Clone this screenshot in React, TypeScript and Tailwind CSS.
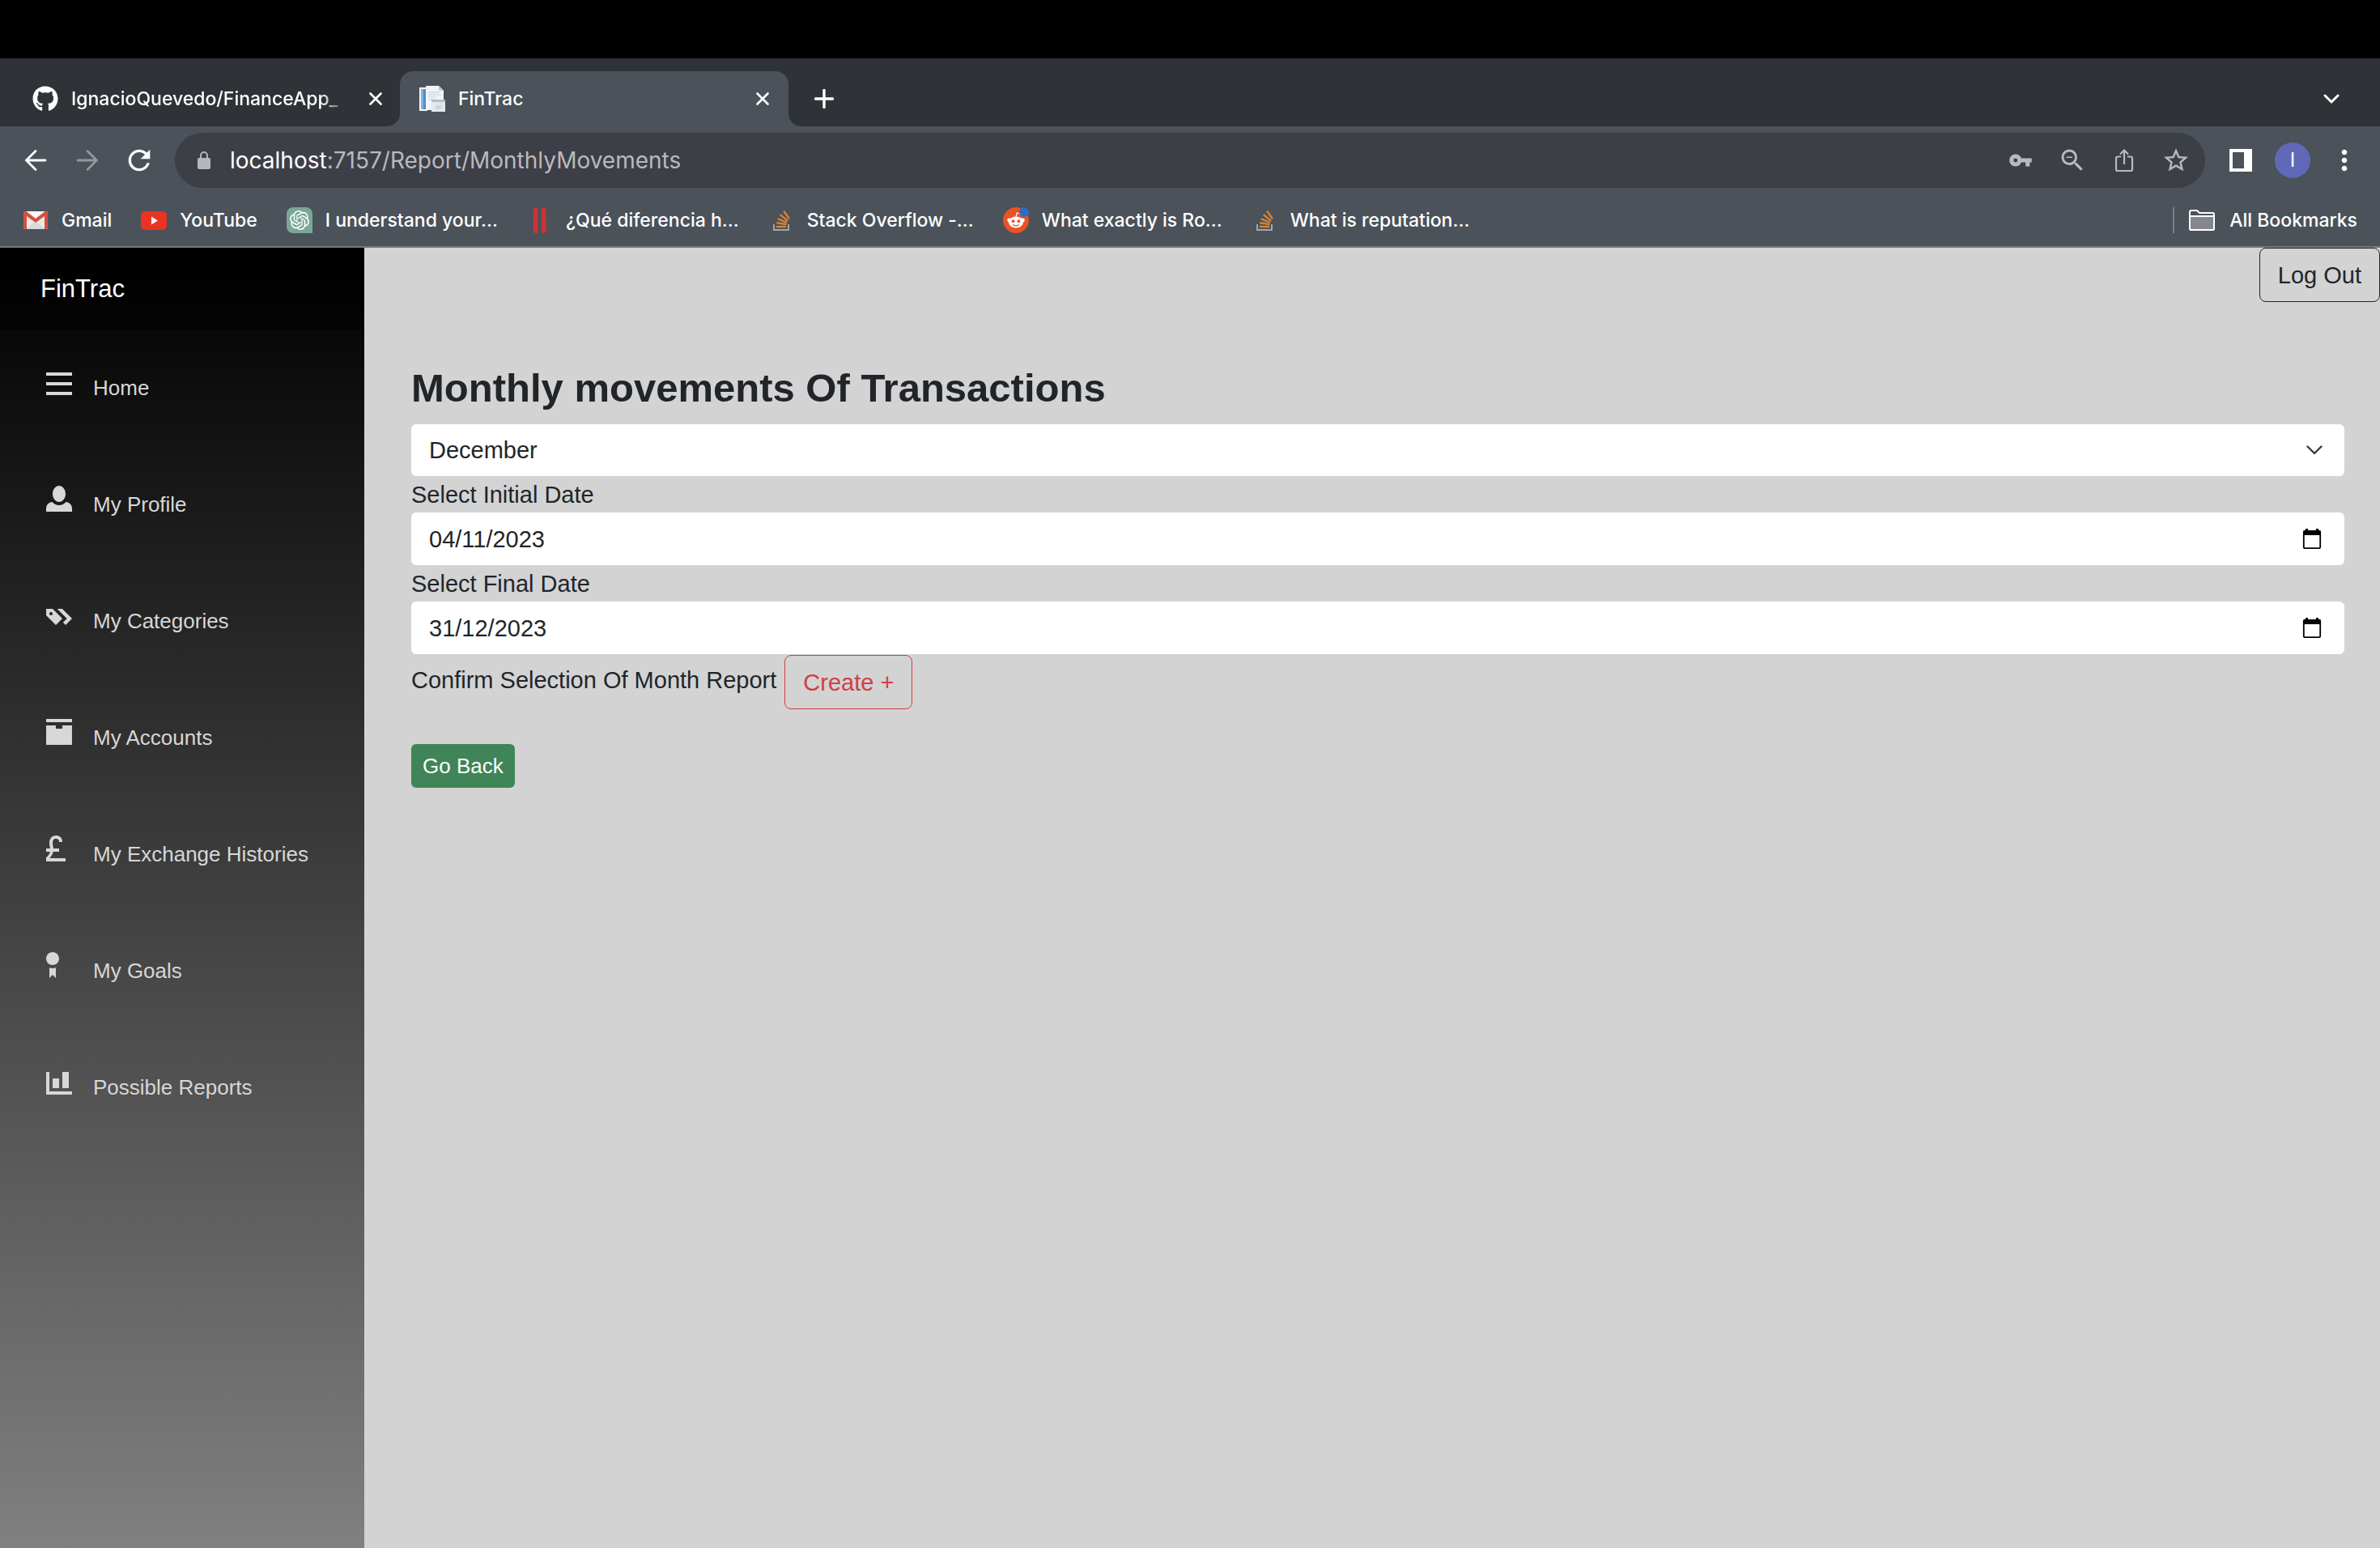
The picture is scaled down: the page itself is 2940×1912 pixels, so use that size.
import React from "react";
import { MdMoreVert, MdRefresh, MdStarBorder, MdVpnKey, MdZoomOut } from "react-icons/md";
import { FaGithub } from "react-icons/fa";
import { SiOpenai } from "react-icons/si";

function CloseIcon() {
  return (
    <svg viewBox="0 0 16 16" className="size-4 fill-none stroke-white stroke-[2.6]" strokeLinecap="round">
      <path d="M1.5 1.5l13 13M14.5 1.5l-13 13" />
    </svg>
  );
}

function PageIcon() {
  return (
    <svg viewBox="0 0 32 32" className="size-8 shrink-0">
      <path d="M0 2h10v29H0z" fill="#f4f7fa" />
      <path d="M2 4h8v25H2z" fill="#4f8fc9" />
      <path d="M2 4h3v25H2z" fill="#7db2e0" />
      <path d="M8 0h16l6 6v24H8z" fill="#f1f4f8" />
      <path d="M24 0v6h6z" fill="#c3cbd4" />
      <path d="M11 8h14M11 11h16M11 14h10M11 17h10" stroke="#c6cdd6" strokeWidth="1.2" />
      <path d="M15 17h17v15H15z" fill="#e3e8ee" />
      <path d="M15 17h17v3H15z" fill="#b5bec9" />
      <path d="M20 24h7v5h-7z" fill="#cdd5de" />
    </svg>
  );
}

function GmailIcon() {
  return (
    <svg viewBox="0 0 32 32" className="size-8">
      <rect x="1" y="5" width="30" height="22" rx="2" fill="#e9e9e9" />
      <path d="M4 27l12-10 12 10z" fill="#d9d9d9" />
      <path d="M4 5l12 11L28 5z" fill="#f7f7f7" />
      <path d="M1 7v18a2 2 0 002 2h2V11l11 8 11-8v16h2a2 2 0 002-2V7c0-2-2-3-4-1.500L16 14 5 5.500C3 4 1 5 1 7z" fill="#d2503f" />
    </svg>
  );
}

function YouTubeIcon() {
  return (
    <svg viewBox="0 0 32 32" className="size-8">
      <rect x="0" y="5" width="32" height="23" rx="5" fill="#ea3323" />
      <path d="M13 11.500v10l8-5z" fill="#fff" />
    </svg>
  );
}

function ChatIcon() {
  return (
    <span className="flex size-8 items-center justify-center rounded-l-lg rounded-tr-lg bg-[#7ba698] text-white">
      <SiOpenai className="size-6" />
    </span>
  );
}

function BarsIcon() {
  return (
    <svg viewBox="0 0 32 32" className="size-8 fill-[#c9353a]">
      <rect x="8" y="0" width="5.500" height="32" rx="2.500" />
      <rect x="18" y="0" width="5.500" height="32" rx="2.500" />
    </svg>
  );
}

function StackIcon() {
  return (
    <svg viewBox="0 0 32 32" className="size-8 fill-none">
      <path d="M7 21v7h18v-7" stroke="#a3a6a9" strokeWidth="2" />
      <g stroke="#dd8438" strokeWidth="2.300">
        <path d="M10 24h12" />
        <path d="M10.300 19.200l12 2" />
        <path d="M11.800 14.200l11.200 4.800" />
        <path d="M14.800 9.200l9.400 7.600" />
        <path d="M19.200 4.600l6.800 9.800" />
      </g>
    </svg>
  );
}

function RedditIcon() {
  return (
    <svg viewBox="0 0 32 32" className="size-8">
      <circle cx="16" cy="16" r="16" fill="#ea5228" />
      <ellipse cx="16" cy="18.500" rx="9" ry="7" fill="#fff" />
      <circle cx="7.600" cy="16" r="2.400" fill="#fff" />
      <circle cx="24.400" cy="16" r="2.400" fill="#fff" />
      <path d="M16 12l1.200-5 4 1" stroke="#fff" strokeWidth="1.200" fill="none" />
      <circle cx="12.600" cy="17.200" r="1.900" fill="#ea5228" />
      <circle cx="19.400" cy="17.200" r="1.900" fill="#ea5228" />
      <path d="M12 21.500q4 2.800 8 0" stroke="#ea5228" strokeWidth="1.200" fill="none" />
      <circle cx="26" cy="6" r="6" fill="#2d6cc0" />
    </svg>
  );
}

const bookmarks = [
  { label: "Gmail", icon: <GmailIcon /> },
  { label: "YouTube", icon: <YouTubeIcon /> },
  { label: "I understand your…", icon: <ChatIcon /> },
  { label: "¿Qué diferencia h…", icon: <BarsIcon /> },
  { label: "Stack Overflow -…", icon: <StackIcon /> },
  { label: "What exactly is Ro…", icon: <RedditIcon /> },
  { label: "What is reputation…", icon: <StackIcon /> },
];

function TabStrip() {
  return (
    <div className="flex h-[84px] items-end bg-[#2f3236] text-[23px] font-medium text-white">
      <div className="flex h-[68px] w-[494px] items-center pr-[22px] pl-10">
        <FaGithub className="size-8 shrink-0" />
        <span className="ml-4 w-[342px] whitespace-nowrap [mask-image:linear-gradient(to_right,black_90%,transparent)]">
          IgnacioQuevedo/FinanceApp_
        </span>
        <button aria-label="Close tab" className="ml-auto"><CloseIcon /></button>
      </div>
      <div className="relative flex h-[68px] w-[480px] items-center rounded-t-2xl bg-[#4b5259] px-6">
        <svg viewBox="0 0 16 16" className="absolute bottom-0 -left-4 size-4 fill-[#4b5259]"><path d="M16 0v16H0A16 16 0 0016 0z" /></svg>
        <svg viewBox="0 0 16 16" className="absolute -right-4 bottom-0 size-4 fill-[#4b5259]"><path d="M0 0v16h16A16 16 0 010 0z" /></svg>
        <PageIcon />
        <span className="ml-4">FinTrac</span>
        <button aria-label="Close tab" className="ml-auto"><CloseIcon /></button>
      </div>
      <button aria-label="New tab" className="ml-8 flex h-[68px] items-center">
        <svg viewBox="0 0 24 24" className="size-6 fill-none stroke-white stroke-[3.400]" strokeLinecap="round"><path d="M12 1.500v21M1.500 12h21" /></svg>
      </button>
      <button aria-label="Search tabs" className="mr-[50px] ml-auto flex h-[68px] items-center">
        <svg viewBox="0 0 20 20" className="size-5 fill-none stroke-white stroke-[3]" strokeLinecap="round"><path d="M2 6l8 8 8-8" /></svg>
      </button>
    </div>
  );
}

function Toolbar() {
  return (
    <div className="flex h-[84px] items-center bg-[#4b5259] px-6 text-white">
      <div className="flex w-[192px] items-center gap-6">
        <button aria-label="Back" className="flex size-10 items-center justify-center">
          <svg viewBox="0 0 28 28" className="size-7 fill-none stroke-white stroke-[2.800]" strokeLinecap="round"><path d="M26 14H3M14 2.500L2.500 14 14 25.500" /></svg>
        </button>
        <button aria-label="Forward" className="flex size-10 items-center justify-center">
          <svg viewBox="0 0 28 28" className="size-7 fill-none stroke-[#94979c] stroke-[2.800]" strokeLinecap="round"><path d="M2 14h23M14 2.500L25.500 14 14 25.500" /></svg>
        </button>
        <button aria-label="Reload"><MdRefresh className="size-10" /></button>
      </div>
      <div className="flex h-[68px] flex-1 items-center rounded-full bg-[#3d3f47] pr-[18px] pl-7 text-[#b9babd]">
        <svg viewBox="0 0 16 22" className="h-[22px] w-4 fill-[#b4b6bb]">
          <rect x="0" y="8" width="16" height="14" rx="2" />
          <path d="M4 9V5a4 4 0 018 0v4" fill="none" stroke="#b4b6bb" strokeWidth="2" />
        </svg>
        <p className="ml-6 flex-1 text-[28px]"><span className="text-white">localhost</span>:7157/Report/MonthlyMovements</p>
        <div className="flex items-center gap-7">
          <button aria-label="Passwords" className="flex size-9 items-center justify-center"><MdVpnKey className="size-[30px]" /></button>
          <button aria-label="Zoom"><MdZoomOut className="size-9" /></button>
          <button aria-label="Share" className="flex size-9 items-center justify-center">
            <svg viewBox="0 0 24 30" className="h-[30px] w-6 fill-none stroke-[#b9babd] stroke-[2.200]">
              <path d="M8 10.500H4a2 2 0 00-2 2V26a2 2 0 002 2h16a2 2 0 002-2V12.500a2 2 0 00-2-2h-4M12 20V3M7 7.500l5-5 5 5" />
            </svg>
          </button>
          <button aria-label="Bookmark this page"><MdStarBorder className="size-9" /></button>
        </div>
      </div>
      <div className="flex items-center">
        <button aria-label="Side panel" className="ml-[30px]">
          <svg viewBox="0 0 28 28" className="size-7"><path d="M0 0h28v28H0zM4 4v20h14V4z" fill="#fff" fillRule="evenodd" /></svg>
        </button>
        <button className="ml-7 size-11 rounded-full bg-[#5f69b8] text-2xl">I</button>
        <button aria-label="Menu" className="ml-[22px]"><MdMoreVert className="size-10" /></button>
      </div>
    </div>
  );
}

function BookmarksBar() {
  return (
    <div className="flex h-[66px] items-center border-b-2 border-[#77767f] bg-[#4b5259] px-7 text-[23px] font-medium text-white">
      <nav className="flex items-center gap-9">
        {bookmarks.map((b) => (
          <a key={b.label} href="#" className="flex items-center gap-4 whitespace-nowrap">
            {b.icon}
            {b.label}
          </a>
        ))}
      </nav>
      <button className="ml-auto flex items-center">
        <span className="mr-[18px] h-8 w-0.5 bg-[#7d7f86]" />
        <svg viewBox="0 0 32 26" className="h-[26px] w-8 stroke-white stroke-2">
          <path d="M1 23V3a2 2 0 012-2h7l3 3h16a2 2 0 012 2v17a2 2 0 01-2 2H3a2 2 0 01-2-2z" fill="#4b5259" />
          <path d="M1 8h30v15a2 2 0 01-2 2H3a2 2 0 01-2-2z" fill="#85868e" />
        </svg>
        <span className="ml-[18px]">All Bookmarks</span>
      </button>
    </div>
  );
}

const navItems = [
  { label: "Home", path: "M0 1v1h8V1zM0 3.970v1h8v-1zM0 6.970v1h8v-1z" },
  { label: "My Profile", path: "M4 0c-1.100 0-2 1.120-2 2.500s.9 2.500 2 2.500 2-1.120 2-2.500-.9-2.500-2-2.500zm-2.090 5c-1.060.050-1.910.920-1.910 2v1h8v-1c0-1.080-.840-1.950-1.910-2-.540.610-1.280 1-2.090 1-.810 0-1.550-.390-2.090-1z" },
  { label: "My Categories", path: "M0 2v2l3 3 1.500-1.500.5-.5-2-2-1-1h-2zm3.410 0l3 3-1.190 1.190.780.780 2-1.970-3-3h-1.590zm-1.910 1c.280 0 .5.220.5.5s-.220.5-.5.5-.5-.220-.5-.5.220-.5.5-.5z" },
  { label: "My Accounts", path: "M0 0v1h8v-1h-8zm0 2v5.910c0 .050.040.090.090.090h7.810c.050 0 .090-.040.090-.090v-5.910h-2.970v1.030h-2.030v-1.030h-3z" },
  { label: "My Exchange Histories", path: "M3 0c-.620 0-1.160.260-1.500.690-.340.430-.5.990-.5 1.560 0 .690.160 1.250.250 1.750h-1.250v1h1.220c-.110.450-.370.960-1.060 1.660l-.160.130v1.210h6v-1h-4.910c.640-.730.980-1.400 1.090-2h1.820v-1h-1.750c-.090-.570-.250-1.110-.250-1.750 0-.390.110-.730.280-.940.170-.210.370-.310.720-.310.390 0 .610.110.750.250s.250.360.250.750h1c0-.580-.170-1.100-.530-1.470-.360-.370-.890-.530-1.470-.530z" },
  { label: "My Goals", path: "M2 0c-1.100 0-2 .9-2 2s.9 2 2 2 2-.9 2-2-.9-2-2-2zm-1 4.810v3.190l1-1 1 1v-3.190c-.310.110-.650.190-1 .190s-.690-.080-1-.190z" },
  { label: "Possible Reports", path: "M0 1v7h8v-1h-7v-6h-1zm5 0v5h2v-5h-2zm-3 2v3h2v-3h-2z" },
];

function Sidebar() {
  return (
    <aside className="w-[450px] shrink-0 bg-linear-to-b/srgb from-black to-[#808080]">
      <div className="flex h-[101px] items-center bg-black/40 pt-0.5 pl-[50px]">
        <a href="#" className="text-[31px] text-white">FinTrac</a>
      </div>
      <nav className="flex flex-col gap-14 pt-[29px]">
        {navItems.map((item) => (
          <a key={item.label} href="#" className="flex h-[88px] items-baseline gap-[26px] pt-5 pl-[57px] text-[26px] leading-8 text-[#d7d7d7]">
            <svg viewBox="0 0 8 8" className="size-8 fill-current"><path d={item.path} /></svg>
            {item.label}
          </a>
        ))}
      </nav>
    </aside>
  );
}

function DateField({ id, label, value }: { id: string; label: string; value: string }) {
  return (
    <div>
      <label htmlFor={id} className="block h-[45px] leading-[47px]">{label}</label>
      <div className="flex h-[65px] items-center rounded-md bg-white pr-7">
        <input id={id} type="text" defaultValue={value} className="h-full flex-1 bg-transparent pt-0.5 pl-[22px] outline-none" />
        <button aria-label={`Open calendar for ${label}`}>
          <svg viewBox="0 0 24 26" className="h-[26px] w-6">
            <path d="M4 0h3v3H4zM17 0h3v3h-3z" />
            <path d="M1 4a2 2 0 012-2h18a2 2 0 012 2v4H1z" />
            <rect x="1.800" y="3" width="20.400" height="21.200" rx="1.500" fill="none" stroke="#000" strokeWidth="1.800" />
          </svg>
        </button>
      </div>
    </div>
  );
}

function ReportPage() {
  return (
    <main className="flex flex-1 flex-col bg-[#d3d3d3] text-[29px] text-[#212529]">
      <button className="h-[67px] self-end rounded-lg border border-[#212529] px-[22px] pt-0.5">Log Out</button>
      <div className="pt-[74px] pr-11 pl-[58px]">
        <h1 className="text-[49px] leading-[64px] font-bold">Monthly movements Of Transactions</h1>
        <div className="relative mt-[13px]">
          <select aria-label="Month" defaultValue="December" className="h-16 w-full appearance-none rounded-md bg-white pt-0.5 pl-[22px] outline-none">
            <option>December</option>
          </select>
          <svg viewBox="0 0 20 20" className="pointer-events-none absolute top-[22px] right-[27px] size-5 fill-none stroke-[#343a40] stroke-[2.400]" strokeLinecap="round" strokeLinejoin="round"><path d="M1.500 5.500l8.500 8.500 8.500-8.500" /></svg>
        </div>
        <DateField id="initial-date" label="Select Initial Date" value="04/11/2023" />
        <DateField id="final-date" label="Select Final Date" value="31/12/2023" />
        <div className="flex items-start gap-[10px] pt-px">
          <span className="leading-[62px]">Confirm Selection Of Month Report</span>
          <button className="h-[67px] rounded-lg border border-[#cf4048] px-[22px] pt-0.5 text-[#cf4048]">Create +</button>
        </div>
        <button className="mt-[43px] h-[54px] rounded-md bg-[#408558] px-[14px] text-[26px] text-white">Go Back</button>
      </div>
    </main>
  );
}

export default function App() {
  return (
    <div className="flex min-h-screen flex-col bg-black pt-[72px] font-['Inter',sans-serif]">
      <header>
        <TabStrip />
        <Toolbar />
        <BookmarksBar />
      </header>
      <div className="flex flex-1 font-['Liberation_Sans',sans-serif]">
        <Sidebar />
        <ReportPage />
      </div>
    </div>
  );
}
